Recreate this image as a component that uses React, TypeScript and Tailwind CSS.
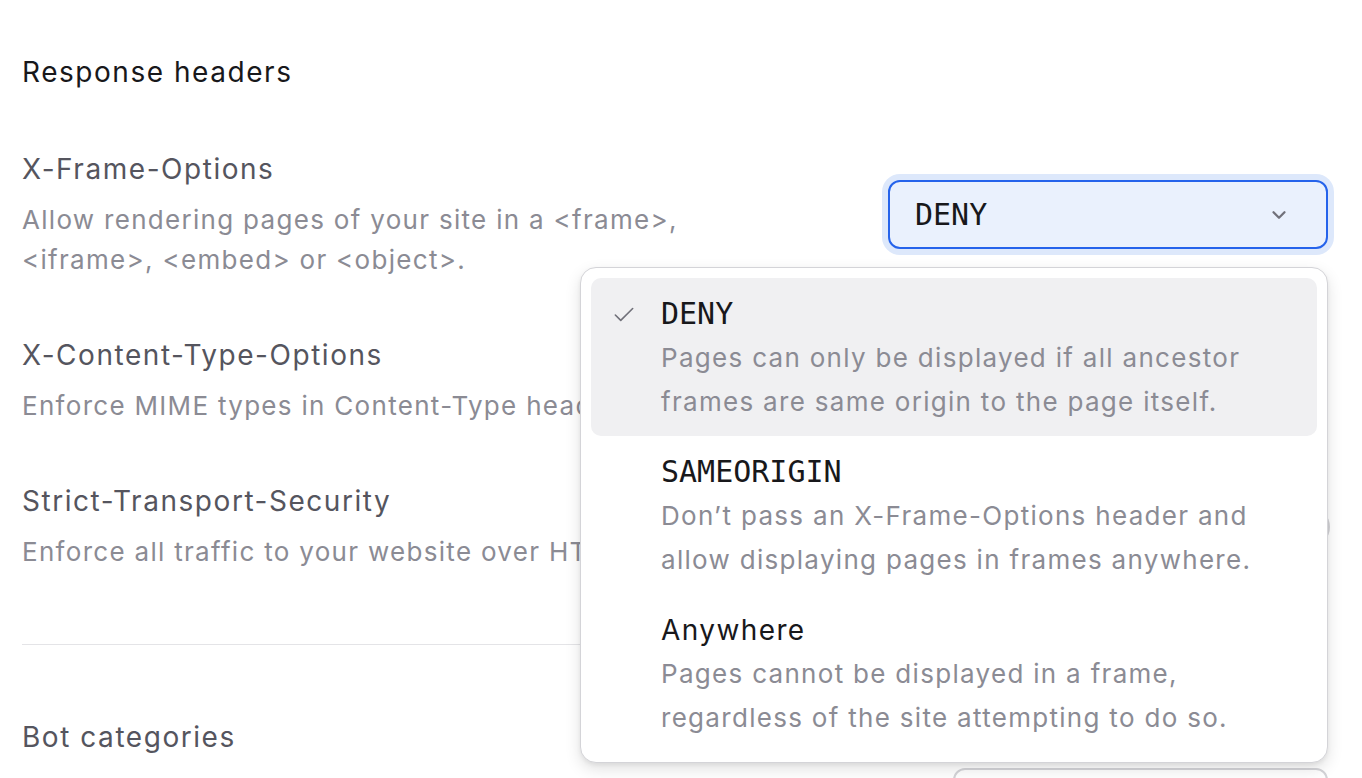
import { Check, ChevronDown } from "lucide-react";

const mono = { fontFamily: '"DejaVu Sans Mono", "Liberation Mono", monospace' };

const options = [
  {
    value: "DENY",
    mono: true,
    desc: ["Pages can only be displayed if all ancestor", "frames are same origin to the page itself."],
  },
  {
    value: "SAMEORIGIN",
    mono: true,
    desc: ["Don\u2019t pass an X-Frame-Options header and", "allow displaying pages in frames anywhere."],
  },
  {
    value: "Anywhere",
    mono: false,
    desc: ["Pages cannot be displayed in a frame,", "regardless of the site attempting to do so."],
  },
];

function Row({
  title,
  desc,
  children,
}: {
  title: string;
  desc: React.ReactNode;
  children?: React.ReactNode;
}) {
  return (
    <div className="flex items-center justify-between">
      <div>
        <p className="text-[28px] leading-[40px] tracking-[0.055em] text-[#55555e]">{title}</p>
        <p className="mt-[11px] text-[26px] leading-[40px] tracking-[0.05em] whitespace-nowrap text-[#8b8b94]">
          {desc}
        </p>
      </div>
      {children}
    </div>
  );
}

function FrameSelect() {
  return (
    <div className="relative">
      <div className="flex h-[69px] w-[440px] items-center justify-between rounded-[12px] border-2 border-[#2563eb] bg-[#eaf1fd] pl-[25px] pr-[36px] shadow-[0_0_0_6px_#dde8fb]">
        <span className="text-[30px] text-[#18181b]" style={mono}>
          DENY
        </span>
        <ChevronDown className="h-[22px] w-[22px] text-[#71717a]" strokeWidth={2.5} />
      </div>
      <div className="absolute right-0 top-[calc(100%+18px)] z-10 w-[748px] rounded-[16px] border border-[#d4d4d8] bg-white p-[10px] shadow-[0_6px_16px_rgba(0,0,0,0.12),0_2px_4px_rgba(0,0,0,0.06)]">
        {options.map((o, i) => (
          <div
            key={o.value}
            className={`relative rounded-[10px] pl-[70px] pr-4 pt-[14px] pb-[12px] ${
              i === 0 ? "bg-[#f0f0f2]" : ""
            }`}
          >
            {i === 0 && (
              <Check
                className="absolute left-[20px] top-[24px] h-[26px] w-[26px] text-[#71717a]"
                strokeWidth={1.5}
              />
            )}
            <p
              className={`text-[#18181b] leading-[44px] ${
                o.mono ? "text-[30px]" : "text-[28px] tracking-[0.05em]"
              }`}
              style={o.mono ? mono : undefined}
            >
              {o.value}
            </p>
            {o.desc.map((d) => (
              <p key={d} className="text-[26px] leading-[44px] tracking-[0.05em] text-[#8b8b94]">
                {d}
              </p>
            ))}
          </div>
        ))}
      </div>
    </div>
  );
}

export default function App() {
  return (
    <div
      className="min-h-screen overflow-hidden bg-white"
      style={{ fontFamily: 'Inter, "Noto Sans", sans-serif' }}
    >
      <div className="pl-[22px] pr-[34px] pt-[52px]">
        <h2 className="text-[28px] leading-[40px] tracking-[0.055em] text-[#18181b]">Response headers</h2>

        <div className="mt-[57px] flex flex-col gap-[55px]">
          <Row
            title="X-Frame-Options"
            desc={
              <>
                Allow rendering pages of your site in a &lt;frame&gt;,
                <br />
                &lt;iframe&gt;, &lt;embed&gt; or &lt;object&gt;.
              </>
            }
          >
            <FrameSelect />
          </Row>
          <Row
            title="X-Content-Type-Options"
            desc="Enforce MIME types in Content-Type headers."
          />
          <Row
            title="Strict-Transport-Security"
            desc="Enforce all traffic to your website over HTTPS."
          >
            <div className="mr-[-2px] h-[40px] w-[70px] rounded-full bg-[#d4d4d8]" />
          </Row>
        </div>

        <div className="mt-[72px] h-px bg-[#e4e4e7]" />

        <p className="mt-[72px] text-[28px] leading-[40px] tracking-[0.055em] text-[#55555e]">Bot categories</p>
        <div className="mt-[11px] flex justify-end">
          <div className="h-[68px] w-[375px] rounded-[12px] border-2 border-[#d4d4d8] bg-white" />
        </div>
      </div>
    </div>
  );
}
